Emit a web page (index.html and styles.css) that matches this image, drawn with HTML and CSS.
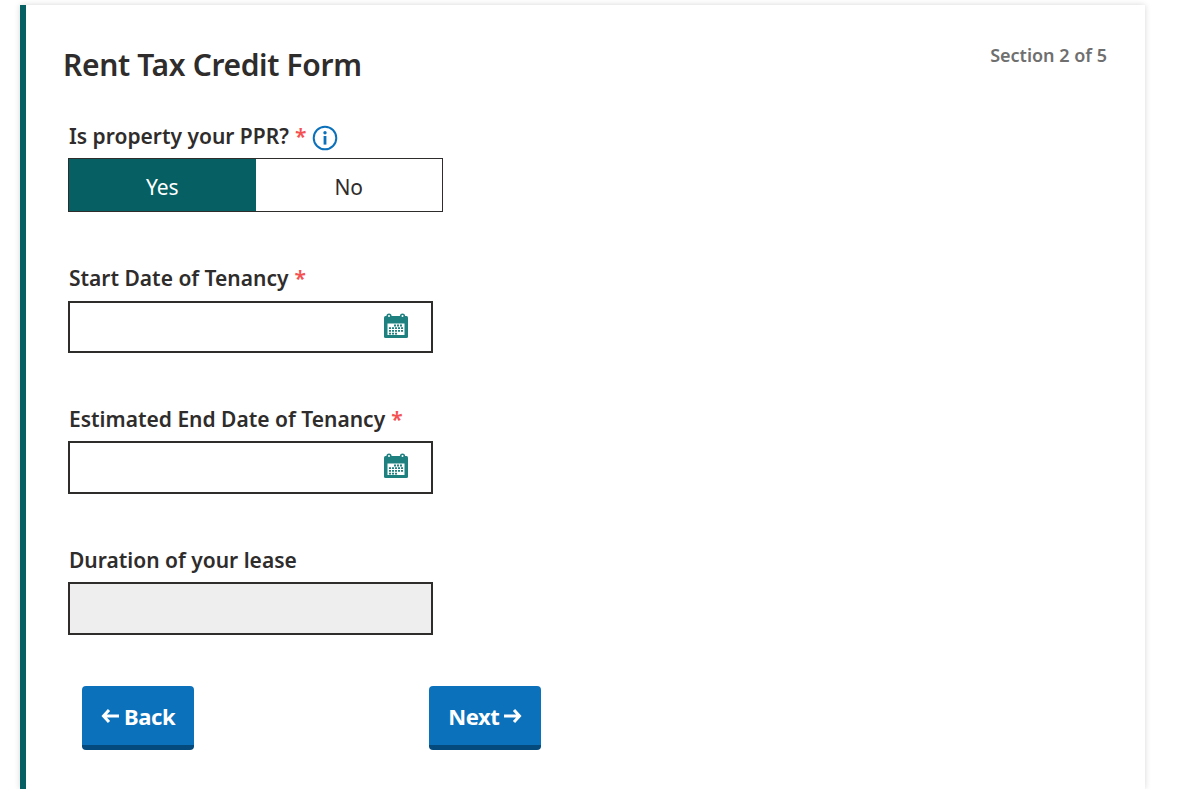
FILE: index.html
```html
<!DOCTYPE html>
<html>
<head>
    <meta charset="UTF-8">
    <title>Rent Tax Credit Form</title>
    <meta name="viewport" content="width=device-width, initial-scale=1.0">
    <link rel="stylesheet" href="styles.css">
</head>
<body>
    <div class="card">
        <div class="card-head">
            <h1>Rent Tax Credit Form</h1>
            <span class="section-count">Section 2 of 5</span>
        </div>

        <div class="field field-ppr">
            <label class="label">Is property your PPR? <span class="req">*</span>
                <svg class="info" width="26" height="26" viewBox="0 0 26 26">
                    <circle cx="13" cy="13" r="11.3" fill="none" stroke="#0c71bb" stroke-width="2"/>
                    <circle cx="13" cy="7.8" r="1.7" fill="#0c71bb"/>
                    <rect x="11.6" y="11" width="2.8" height="8.6" fill="#0c71bb"/>
                </svg>
            </label>
            <div class="toggle">
                <button class="toggle-opt active">Yes</button>
                <button class="toggle-opt">No</button>
            </div>
        </div>

        <div class="field field-start">
            <label class="label">Start Date of Tenancy <span class="req">*</span></label>
            <div class="input">
                <svg class="cal" width="24" height="26" viewBox="0 0 24 26">
                    <rect x="0" y="3" width="24" height="22" rx="1.5" fill="#1f8080"/>
                    <circle cx="5" cy="3" r="2.6" fill="#1f8080"/>
                    <circle cx="18.5" cy="3" r="2.6" fill="#1f8080"/>
                    <circle cx="5" cy="3" r="1" fill="#fff"/>
                    <circle cx="18.5" cy="3" r="1" fill="#fff"/>
                    <rect x="3.5" y="10.5" width="17" height="11.5" fill="#fff"/>
                    <path d="M10 12.5h8M5 15.2h14M5 17.9h14M5 20.6h9" stroke="#1f8080" stroke-width="1.8" stroke-dasharray="2 1" fill="none"/>
                </svg>
            </div>
        </div>

        <div class="field">
            <label class="label">Estimated End Date of Tenancy <span class="req">*</span></label>
            <div class="input">
                <svg class="cal" width="24" height="26" viewBox="0 0 24 26">
                    <rect x="0" y="3" width="24" height="22" rx="1.5" fill="#1f8080"/>
                    <circle cx="5" cy="3" r="2.6" fill="#1f8080"/>
                    <circle cx="18.5" cy="3" r="2.6" fill="#1f8080"/>
                    <circle cx="5" cy="3" r="1" fill="#fff"/>
                    <circle cx="18.5" cy="3" r="1" fill="#fff"/>
                    <rect x="3.5" y="10.5" width="17" height="11.5" fill="#fff"/>
                    <path d="M10 12.5h8M5 15.2h14M5 17.9h14M5 20.6h9" stroke="#1f8080" stroke-width="1.8" stroke-dasharray="2 1" fill="none"/>
                </svg>
            </div>
        </div>

        <div class="field">
            <label class="label">Duration of your lease</label>
            <div class="input input-disabled"></div>
        </div>

        <div class="actions">
            <button class="btn">
                <svg class="arrow" width="18" height="16" viewBox="0 0 18 16">
                    <path d="M8 2 2.5 8 8 14M3 8h15" fill="none" stroke="#fff" stroke-width="3"/>
                </svg>
                Back
            </button>
            <button class="btn">
                Next
                <svg class="arrow" width="18" height="16" viewBox="0 0 18 16">
                    <path d="M10 2l5.5 6L10 14M15 8H0" fill="none" stroke="#fff" stroke-width="3"/>
                </svg>
            </button>
        </div>
    </div>
</body>
</html>
```

FILE: styles.css
```css
html, body {
    height: 100%;
    overflow: hidden;
}
body {
    margin: 0;
    padding: 5px 41px 0 20px;
    box-sizing: border-box;
    background-color: #fff;
    color: #2f2c2c;
    font-family: "Noto Sans", Arial, sans-serif;
}
.card {
    height: 784px;
    box-sizing: border-box;
    padding: 0 38px 0 37px;
    background-color: #fff;
    border-left: 6px solid #055f63;
    box-shadow: 0 0 6px rgba(0, 0, 0, 0.16);
}
.card-head {
    display: flex;
    justify-content: space-between;
    align-items: flex-start;
    height: 112px;
}
h1 {
    margin: 39px 0 0;
    font-size: 30px;
    line-height: 42px;
    font-weight: 600;
    letter-spacing: -0.35px;
}
.section-count {
    margin-top: 36px;
    font-size: 18px;
    line-height: 28px;
    font-weight: 600;
    color: #6f6f6f;
}
.field {
    width: 364px;
    margin-left: 6px;
    height: 141px;
}
.field-ppr {
    height: 142px;
}
.label {
    display: flex;
    align-items: center;
    gap: 6px;
    height: 41px;
    padding-bottom: 4px;
    box-sizing: border-box;
    font-size: 21px;
    font-weight: 600;
    white-space: nowrap;
}
.req {
    color: #f55151;
}
.info {
    margin-top: 5px;
}
.toggle {
    display: flex;
    width: 375px;
    height: 54px;
    box-sizing: border-box;
    margin-left: -1px;
    border: 1px solid #2f2c2c;
}
.toggle-opt {
    flex: 1;
    border: 0;
    padding: 3px 0 0;
    background-color: #fff;
    color: #2f2c2c;
    font: inherit;
    font-size: 21px;
}
.toggle-opt.active {
    background-color: #055f63;
    color: #fff;
}
.input {
    display: flex;
    align-items: center;
    justify-content: flex-end;
    height: 53px;
    box-sizing: border-box;
    margin-left: -1px;
    padding-right: 23px;
    padding-bottom: 3px;
    border: 2px solid #2f2c2c;
}
.field-start .input {
    height: 52px;
    margin-top: 1px;
}
.input-disabled {
    background-color: #eee;
}
.actions {
    display: flex;
    gap: 235px;
    margin: 4px 0 0 19px;
}
.btn {
    display: flex;
    align-items: center;
    gap: 5px;
    height: 64px;
    box-sizing: border-box;
    padding: 0 19px;
    border: 0;
    border-bottom: 5px solid #054a7d;
    border-radius: 4px;
    background-color: #0c71bb;
    color: #fff;
    font: inherit;
    font-size: 22px;
    font-weight: 700;
    letter-spacing: -0.4px;
}
```
